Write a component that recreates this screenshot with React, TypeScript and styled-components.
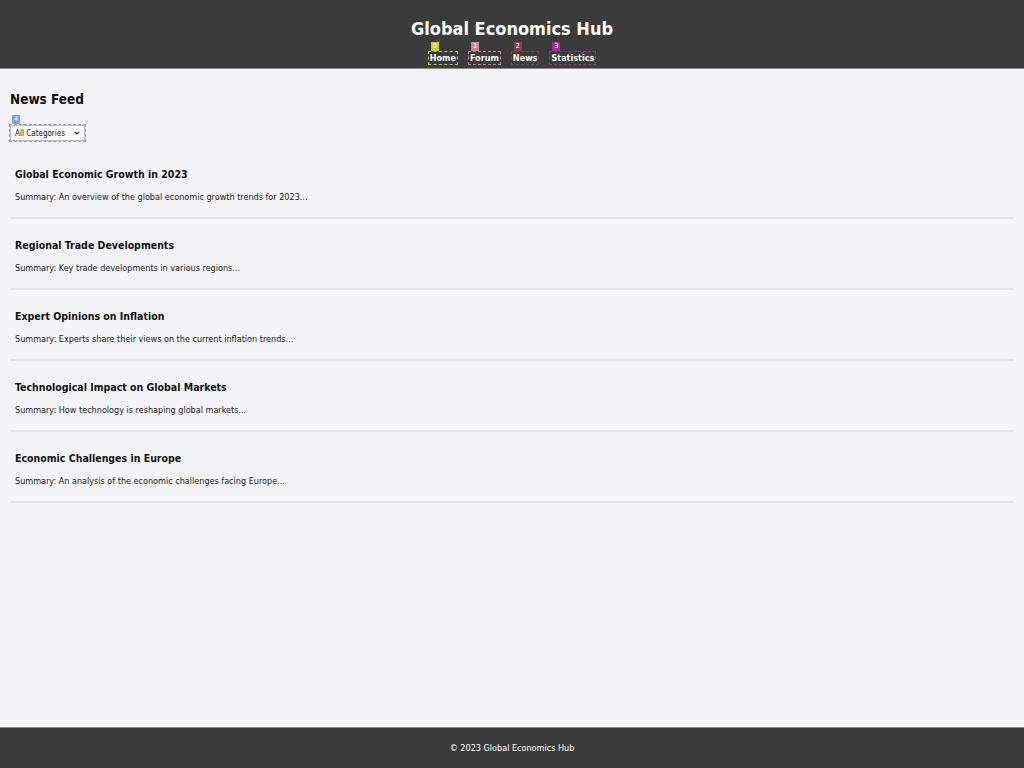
import React from "react";
import styled, { createGlobalStyle } from "styled-components";

const FONT = `"DejaVu Sans Condensed", "DejaVu Sans", sans-serif`;

const Global = createGlobalStyle`
  html, body { margin: 0; padding: 0; }
  body {
    font-family: ${FONT};
    font-size: 9px;
    background: #f4f3f8;
    color: #111;
  }
`;

const Page = styled.div`
  min-height: 100vh;
  display: flex;
  flex-direction: column;
`;

const Header = styled.header`
  background: #3b3b3b;
  color: #fff;
  text-align: center;
  padding: 18px 0 4px;
  border-bottom: 1px solid #8a8a8a;
`;

const Title = styled.h1`
  margin: 0;
  font-size: 18px;
  font-weight: bold;
  line-height: 21px;
`;

const Nav = styled.nav`
  display: flex;
  justify-content: center;
  gap: 12px;
  margin-top: 13px;
`;

const Tagged = styled.span<{ $c: string }>`
  position: relative;
  display: inline-block;
  align-self: flex-start;
  outline: 1px dashed ${(p) => p.$c};
`;

const Badge = styled.span<{ $c: string }>`
  position: absolute;
  left: 2px;
  top: -10px;
  background: ${(p) => p.$c};
  color: #fff;
  font-size: 7px;
  line-height: 9px;
  padding: 0 2px;
  font-weight: normal;
`;

const NavLink = styled.a`
  color: #fff;
  font-weight: bold;
  font-size: 9px;
  line-height: 12px;
  text-decoration: none;
  display: block;
  padding: 0 1px;
`;

const Main = styled.main`
  flex: 1;
  padding: 22px 10px 20px;
`;

const SectionTitle = styled.h2`
  margin: 0 0 18px;
  font-size: 13.5px;
  line-height: 16px;
`;

const SelectBox = styled.div`
  position: relative;
  width: 75px;
  height: 16px;
`;

const Select = styled.select`
  appearance: none;
  font-family: ${FONT};
  font-size: 8px;
  color: #111;
  width: 75px;
  height: 16px;
  display: block;
  padding: 0 0 0 4px;
  margin: 0;
  border: 1px solid #b9b9c6;
  border-radius: 0;
  background: #fff;
`;

const Chevron = styled.svg`
  position: absolute;
  right: 5px;
  top: 6px;
  width: 6px;
  height: 4px;
  pointer-events: none;
`;

const List = styled.div`
  margin-top: 7px;
`;

const Article = styled.article`
  padding: 10px 5px 5px;
  border-bottom: 2px solid #e3e2e7;
`;

const ArticleTitle = styled.h3`
  margin: 10px 0 0;
  font-size: 10.5px;
  line-height: 13px;
`;

const Summary = styled.p`
  margin: 11px 0 9px;
  font-size: 9px;
  line-height: 11px;
  color: #1a1a1a;
`;

const Footer = styled.footer`
  background: #3b3b3b;
  color: #fff;
  text-align: center;
  font-size: 9px;
  line-height: 10px;
  padding: 15px 0;
  border-top: 1px solid #8a8a8a;
`;

const articles = [
  ["Global Economic Growth in 2023", "Summary: An overview of the global economic growth trends for 2023..."],
  ["Regional Trade Developments", "Summary: Key trade developments in various regions..."],
  ["Expert Opinions on Inflation", "Summary: Experts share their views on the current inflation trends..."],
  ["Technological Impact on Global Markets", "Summary: How technology is reshaping global markets..."],
  ["Economic Challenges in Europe", "Summary: An analysis of the economic challenges facing Europe..."],
];

const links: [string, string][] = [
  ["Home", "#c9c92a"],
  ["Forum", "#cf8595"],
  ["News", "#7a4455"],
  ["Statistics", "#a32ba0"],
];

export default function App() {
  return (
    <Page>
      <Global />
      <Header>
        <Title>Global Economics Hub</Title>
        <Nav>
          {links.map(([t, c], i) => (
            <Tagged key={t} $c={c}>
              <Badge $c={c}>{i}</Badge>
              <NavLink href="#">{t}</NavLink>
            </Tagged>
          ))}
        </Nav>
      </Header>
      <Main>
        <SectionTitle>News Feed</SectionTitle>
        <Tagged $c="#8b9ad8">
          <Badge $c="#8b9ad8">4</Badge>
          <SelectBox>
            <Select>
              <option>All Categories</option>
            </Select>
            <Chevron viewBox="0 0 6 4">
              <path d="M0.8 0.8 L3 3 L5.2 0.8" fill="none" stroke="#222" strokeWidth="1.2" />
            </Chevron>
          </SelectBox>
        </Tagged>
        <List>
          {articles.map(([t, s]) => (
            <Article key={t}>
              <ArticleTitle>{t}</ArticleTitle>
              <Summary>{s}</Summary>
            </Article>
          ))}
        </List>
      </Main>
      <Footer>© 2023 Global Economics Hub</Footer>
    </Page>
  );
}
